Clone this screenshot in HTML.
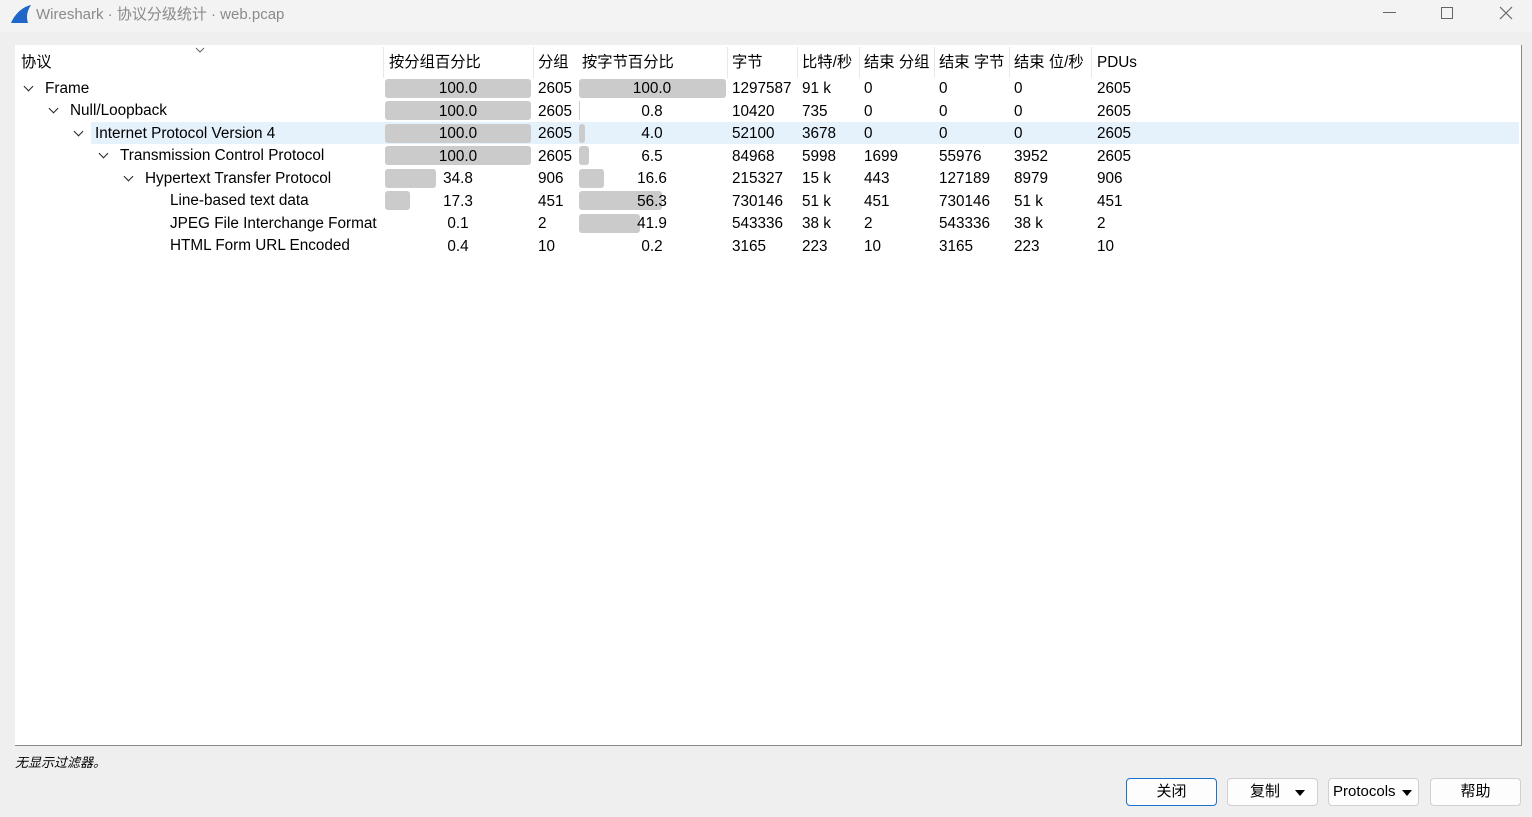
<!DOCTYPE html>
<html><head><meta charset="utf-8"><style>
*{margin:0;padding:0;box-sizing:border-box}
body{width:1532px;height:817px;background:#efefef;font-family:"Liberation Sans","Noto Sans CJK SC",sans-serif;position:relative;overflow:hidden;color:#000}
.a{position:absolute;white-space:nowrap}
.t{font-size:15.3px;line-height:22px}
.bar{position:absolute;background:#cbcbcb;border-radius:3px;height:19px}
.btn{position:absolute;top:778px;height:28px;background:#fdfdfd;border:1px solid #d0d0d0;border-radius:4px;font-size:15px;line-height:26px;text-align:center}
.chev{position:absolute;width:7px;height:7px;border-right:1.5px solid #222;border-bottom:1.5px solid #222;transform:rotate(45deg)}
.col{position:absolute;top:78px;font-size:15.3px;line-height:22.5px}
</style></head><body>
<div class="a" style="left:0;top:0;width:1532px;height:32px;background:#f3f3f3"></div>
<svg class="a" style="left:10px;top:4px" width="22" height="20"><path d="M1 19 C5 10 12 3 21 1 C17 7 16 13 18 19 Z" fill="#1f66c8"/></svg>
<div class="a" style="left:36px;top:3px;font-size:15px;color:#8a8a8a">Wireshark · 协议分级统计 · web.pcap</div>
<div class="a" style="left:1383px;top:12px;width:13px;border-top:1px solid #666"></div>
<div class="a" style="left:1441px;top:7px;width:12px;height:12px;border:1px solid #666"></div>
<svg class="a" style="left:1499px;top:6px" width="14" height="14"><path d="M1 1L13 13M13 1L1 13" stroke="#666" stroke-width="1.2"/></svg>

<div class="a" style="left:15px;top:45px;width:1507px;height:701px;background:#fff;border-right:1px solid #8a8a8a;border-bottom:1px solid #8a8a8a"></div>
<svg class="a" style="left:195px;top:47px" width="10" height="6"><path d="M1 1L5 5L9 1" stroke="#666" fill="none"/></svg>
<div class="a" style="left:383px;top:47px;height:31px;border-left:1px solid #e8e8e8"></div>
<div class="a" style="left:533px;top:47px;height:31px;border-left:1px solid #e8e8e8"></div>
<div class="a" style="left:727px;top:47px;height:31px;border-left:1px solid #e8e8e8"></div>
<div class="a" style="left:797px;top:47px;height:31px;border-left:1px solid #e8e8e8"></div>
<div class="a" style="left:859px;top:47px;height:31px;border-left:1px solid #e8e8e8"></div>
<div class="a" style="left:934px;top:47px;height:31px;border-left:1px solid #e8e8e8"></div>
<div class="a" style="left:1009px;top:47px;height:31px;border-left:1px solid #e8e8e8"></div>
<div class="a" style="left:1091px;top:47px;height:31px;border-left:1px solid #e8e8e8"></div>

<div class="a" style="left:91px;top:122px;width:1428px;height:22px;background:#e5f1fb"></div>

<div class="a t" style="top:52px;left:21px">协议</div>
<div class="a t" style="top:52px;left:389px">按分组百分比</div>
<div class="a t" style="top:52px;left:538px">分组</div>
<div class="a t" style="top:52px;left:582px">按字节百分比</div>
<div class="a t" style="top:52px;left:732px">字节</div>
<div class="a t" style="top:52px;left:802px">比特/秒</div>
<div class="a t" style="top:52px;left:864px">结束 分组</div>
<div class="a t" style="top:52px;left:939px">结束 字节</div>
<div class="a t" style="top:52px;left:1014px">结束 位/秒</div>
<div class="a t" style="top:52px;left:1097px">PDUs</div>

<div class="bar" style="left:385px;top:79px;width:146px"></div>
<div class="bar" style="left:385px;top:101px;width:146px"></div>
<div class="bar" style="left:385px;top:124px;width:146px"></div>
<div class="bar" style="left:385px;top:146px;width:146px"></div>
<div class="bar" style="left:385px;top:169px;width:51px"></div>
<div class="bar" style="left:385px;top:191px;width:25px"></div>
<div class="bar" style="left:579px;top:79px;width:147px"></div>
<div class="bar" style="left:579px;top:101px;width:1px"></div>
<div class="bar" style="left:579px;top:124px;width:6px"></div>
<div class="bar" style="left:579px;top:146px;width:10px"></div>
<div class="bar" style="left:579px;top:169px;width:25px"></div>
<div class="bar" style="left:579px;top:191px;width:83px"></div>
<div class="bar" style="left:579px;top:214px;width:61px"></div>

<div class="chev" style="left:25px;top:83px"></div>
<div class="chev" style="left:50px;top:105px"></div>
<div class="chev" style="left:75px;top:128px"></div>
<div class="chev" style="left:100px;top:150px"></div>
<div class="chev" style="left:125px;top:173px"></div>

<div class="a t" style="top:78px;left:45px">Frame</div>
<div class="a t" style="top:100px;left:70px">Null/Loopback</div>
<div class="a t" style="top:123px;left:95px">Internet Protocol Version 4</div>
<div class="a t" style="top:145px;left:120px">Transmission Control Protocol</div>
<div class="a t" style="top:168px;left:145px">Hypertext Transfer Protocol</div>
<div class="a t" style="top:190px;left:170px">Line-based text data</div>
<div class="a t" style="top:213px;left:170px">JPEG File Interchange Format</div>
<div class="a t" style="top:235px;left:170px">HTML Form URL Encoded</div>

<div class="col" style="left:383px;width:150px;text-align:center">100.0<br>100.0<br>100.0<br>100.0<br>34.8<br>17.3<br>0.1<br>0.4</div>
<div class="col" style="left:577px;width:150px;text-align:center">100.0<br>0.8<br>4.0<br>6.5<br>16.6<br>56.3<br>41.9<br>0.2</div>
<div class="col" style="left:538px">2605<br>2605<br>2605<br>2605<br>906<br>451<br>2<br>10</div>
<div class="col" style="left:732px">1297587<br>10420<br>52100<br>84968<br>215327<br>730146<br>543336<br>3165</div>
<div class="col" style="left:802px">91 k<br>735<br>3678<br>5998<br>15 k<br>51 k<br>38 k<br>223</div>
<div class="col" style="left:864px">0<br>0<br>0<br>1699<br>443<br>451<br>2<br>10</div>
<div class="col" style="left:939px">0<br>0<br>0<br>55976<br>127189<br>730146<br>543336<br>3165</div>
<div class="col" style="left:1014px">0<br>0<br>0<br>3952<br>8979<br>51 k<br>38 k<br>223</div>
<div class="col" style="left:1097px">2605<br>2605<br>2605<br>2605<br>906<br>451<br>2<br>10</div>

<div class="a" style="left:15px;top:752px;font-size:13px;font-style:italic">无显示过滤器。</div>

<div class="btn" style="left:1126px;width:91px;border:1px solid #1a73d0">关闭</div>
<div class="btn" style="left:1227px;width:91px;text-align:left;padding-left:22px">复制<span style="position:absolute;right:12px;top:11px;border-left:5px solid transparent;border-right:5px solid transparent;border-top:6px solid #000"></span></div>
<div class="btn" style="left:1328px;width:91px;text-align:left;padding-left:4px">Protocols<span style="position:absolute;right:6px;top:11px;border-left:5px solid transparent;border-right:5px solid transparent;border-top:6px solid #000"></span></div>
<div class="btn" style="left:1430px;width:91px">帮助</div>
</body></html>
